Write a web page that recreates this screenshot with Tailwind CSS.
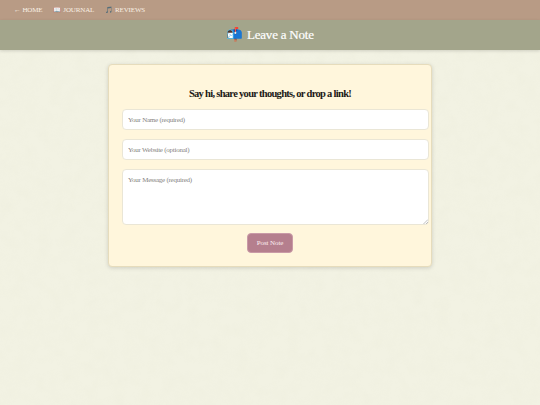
<!DOCTYPE html>
<html><head><meta charset="utf-8"><script src="https://cdn.jsdelivr.net/npm/@tailwindcss/browser@4"></script></head>
<body class="relative bg-[#f2f2e3] font-['Liberation_Serif',serif] h-[405px] overflow-hidden">
<svg class="absolute inset-0 w-full h-full" aria-hidden="true"><filter id="paper"><feTurbulence type="fractalNoise" baseFrequency="0.08" numOctaves="3" seed="4"/><feColorMatrix values="0 0 0 0 0.75  0 0 0 0 0.75  0 0 0 0 0.6  0.5 0.5 0 0 -0.38"/></filter><rect width="100%" height="100%" filter="url(#paper)" opacity="0.25"/></svg>
<nav class="relative h-[20px] bg-[#b89b85] flex items-center pl-[14px] gap-[11px] text-[7px] text-[#f8f0e4] tracking-[-0.15px]">
<a>← HOME</a><a class="flex items-center gap-[2px]"><span class="text-[6.5px]">📖</span>JOURNAL</a><a class="flex items-center gap-[2px]"><span class="text-[6.5px]">🎵</span>REVIEWS</a>
</nav>
<header class="relative h-[30px] bg-[#a3a58b] flex items-center justify-center gap-[4px] shadow-[0_1px_3px_rgba(0,0,0,0.15)] text-white text-[13px] tracking-[-0.2px]"><span class="text-[13.5px]">📬</span><span class="[-webkit-text-stroke:0.2px_white]">Leave a Note</span></header>
<main class="relative pt-[14px]">
<section class="mx-auto w-[324px] h-[203px] bg-[#fff6dc] border border-[#e6dcbc] rounded-[4px] shadow-[0_1px_4px_rgba(0,0,0,0.15)] pt-[21px] pl-[13px] pr-[2px]">
<h2 class="text-center text-[10.5px] tracking-[-0.7px] font-bold text-[#1c1a17] leading-[15px] mb-[8px] pr-[11px]">Say hi, share your thoughts, or drop a link!</h2>
<form class="flex flex-col gap-[9px] items-center">
<input class="w-full h-[21px] bg-white border border-[#eae6d6] rounded-[4px] px-[5px] text-[7px] tracking-[-0.25px] placeholder:text-[#85837e]" placeholder="Your Name (required)">
<input class="w-full h-[21px] bg-white border border-[#eae6d6] rounded-[4px] px-[5px] text-[7px] tracking-[-0.25px] placeholder:text-[#85837e]" placeholder="Your Website (optional)">
<div class="relative w-full h-[56px]">
<textarea class="block w-full h-full resize-none bg-white border border-[#eae6d6] rounded-[4px] px-[5px] py-[5px] text-[7px] tracking-[-0.25px] placeholder:text-[#85837e]" placeholder="Your Message (required)"></textarea>
<svg class="absolute right-[1px] bottom-[1px] w-[5px] h-[5px]" viewBox="0 0 5 5"><path d="M0.5 5 L5 0.5 M3 5 L5 3" stroke="#a5a5a5" stroke-width="0.7"/></svg>
</div>
<button class="w-[46px] h-[20px] -mt-[1px] mr-[11px] bg-[#b57f8e] border border-[#c99aa7] rounded-[4px] text-[7px] tracking-[-0.1px] text-[#fbeeee]">Post Note</button>
</form>
</section>
</main>
</body></html>
